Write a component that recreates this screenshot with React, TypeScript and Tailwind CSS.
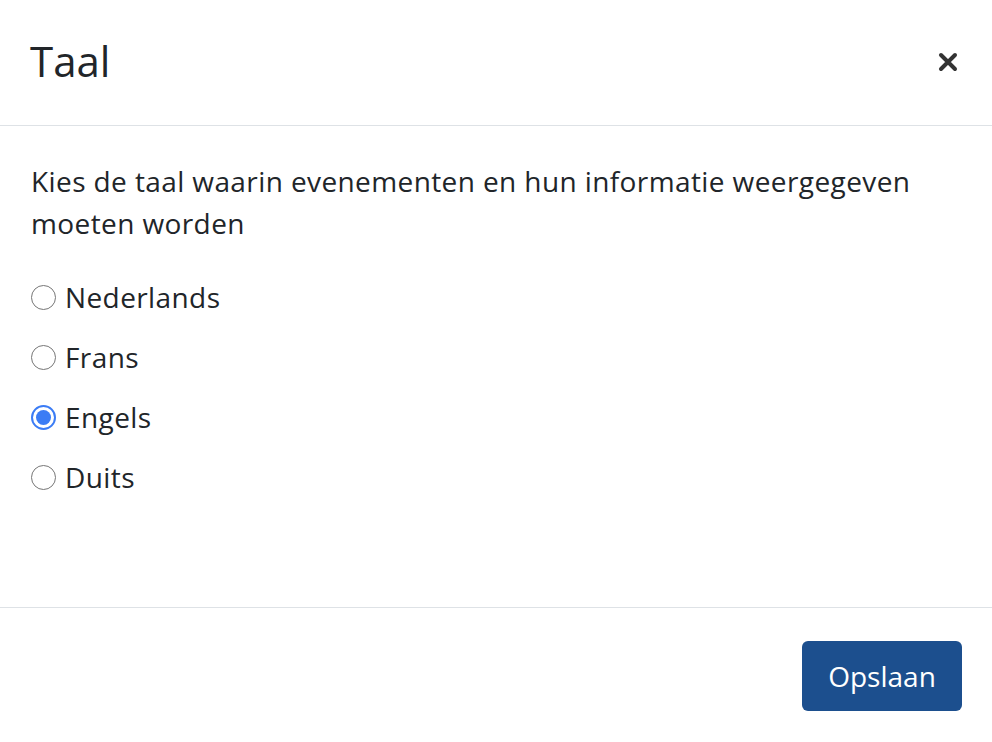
import React, { useState } from "react";

const langs = ["Nederlands", "Frans", "Engels", "Duits"];

export default function App() {
  const [sel, setSel] = useState("Engels");
  return (
    <div
      className="w-[992px] h-[742px] bg-white flex flex-col text-[#212529]"
      style={{ fontFamily: '"Open Sans", "Noto Sans", sans-serif' }}
    >
      <div className="h-[126px] border-b border-[#dee2e6] flex items-center justify-between pl-[30px] pr-[32px] shrink-0">
        <h1 className="text-[42px] leading-none font-normal pb-[4px]">Taal</h1>
        <button className="w-[24px] h-[24px] flex items-center justify-center mb-[2px]">
          <svg width="20" height="20" viewBox="0 0 20 20">
            <path d="M3 3 L17 17 M17 3 L3 17" stroke="#333" strokeWidth="4" strokeLinecap="round" />
          </svg>
        </button>
      </div>
      <div className="flex-1 pl-[31px] pr-[31px] pt-[34px]">
        <p className="text-[28px] leading-[42px] m-0 tracking-[0.4px]">
          Kies de taal waarin evenementen en hun informatie weergegeven moeten worden
        </p>
        <div className="mt-[33px] flex flex-col gap-[20px]">
          {langs.map((l) => (
            <label key={l} className="flex items-center h-[40px] cursor-pointer">
              <span
                className={
                  "w-[25px] h-[25px] rounded-full flex items-center justify-center shrink-0 " +
                  (sel === l ? "border-[2px] border-[#3b7cf5]" : "border-[1.5px] border-[#767676]")
                }
              >
                {sel === l && <span className="w-[15px] h-[15px] rounded-full bg-[#3b7cf5]" />}
              </span>
              <input
                type="radio"
                name="lang"
                className="hidden"
                checked={sel === l}
                onChange={() => setSel(l)}
              />
              <span className="ml-[9px] text-[28px] leading-none tracking-[0.4px]">{l}</span>
            </label>
          ))}
        </div>
      </div>
      <div className="h-[135px] border-t border-[#dee2e6] flex items-center justify-end pr-[30px] shrink-0">
        <button className="w-[160px] h-[70px] rounded-[6px] bg-[#1c4f8e] text-white text-[28px] mt-[2px]">
          Opslaan
        </button>
      </div>
    </div>
  );
}
